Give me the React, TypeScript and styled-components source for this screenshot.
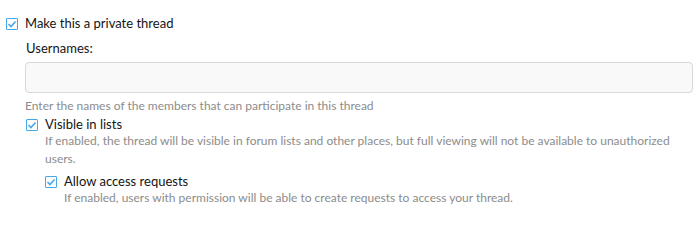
import React from "react";
import styled, { createGlobalStyle } from "styled-components";

const Global = createGlobalStyle`
  html, body { margin: 0; padding: 0; background: #fff; }
  body { font-family: "Segoe UI", Lato, "Open Sans", sans-serif; color: #141414; }
  * { box-sizing: border-box; }
`;

const Page = styled.div`
  padding: 14px 6px 0 5px;
`;

const Option = styled.div`
  display: flex;
  flex-direction: column;
`;

const OptionRow = styled.label`
  display: flex;
  align-items: center;
  gap: 7px;
  font-size: 13px;
  line-height: 19px;
  color: #141414;
`;

const Box = styled.span`
  width: 12px;
  height: 12px;
  flex: 0 0 12px;
  margin-left: 1px;
  border: 1px solid #47a7eb;
  background: #fff;
  border-radius: 1px;
  display: flex;
  align-items: center;
  justify-content: center;
`;

const Dependents = styled.div<{ $top?: number; $indent?: number }>`
  padding-left: ${(p) => p.$indent ?? 20}px;
  margin-top: ${(p) => p.$top ?? 0}px;
  display: flex;
  flex-direction: column;
`;

const FieldLabel = styled.div`
  font-size: 13px;
  line-height: 19px;
  margin-top: 6px;
  padding-left: 1px;
`;

const Input = styled.div`
  height: 31px;
  border: 1px solid #d8d8d8;
  border-radius: 4px;
  background: #f9f9f9;
  margin-top: 4px;
`;

const Hint = styled.div<{ $indent?: number; $top?: number }>`
  font-size: 12px;
  line-height: 18px;
  color: #8c8c8c;
  padding-left: ${(p) => p.$indent ?? 0}px;
  margin-top: ${(p) => p.$top ?? -2}px;
`;

const Check = () => (
  <Box>
    <svg width="10" height="10" viewBox="0 0 10 10">
      <path d="M1.5 5 L4 7.5 L8.5 2.5" fill="none" stroke="#47a7eb" strokeWidth="1.6" />
    </svg>
  </Box>
);

export default function App() {
  return (
    <>
      <Global />
      <Page>
        <Option>
          <OptionRow>
            <Check />
            Make this a private thread
          </OptionRow>
          <Dependents>
            <FieldLabel>Usernames:</FieldLabel>
            <Input />
            <Hint $top={4}>Enter the names of the members that can participate in this thread</Hint>
            <Option>
              <OptionRow>
                <Check />
                Visible in lists
              </OptionRow>
              <Hint $indent={20}>
                If enabled, the thread will be visible in forum lists and other places, but full viewing will not be available to unauthorized users.
              </Hint>
              <Dependents $top={4} $indent={19}>
                <Option>
                  <OptionRow>
                    <Check />
                    Allow access requests
                  </OptionRow>
                  <Hint $indent={20}>
                    If enabled, users with permission will be able to create requests to access your thread.
                  </Hint>
                </Option>
              </Dependents>
            </Option>
          </Dependents>
        </Option>
      </Page>
    </>
  );
}
